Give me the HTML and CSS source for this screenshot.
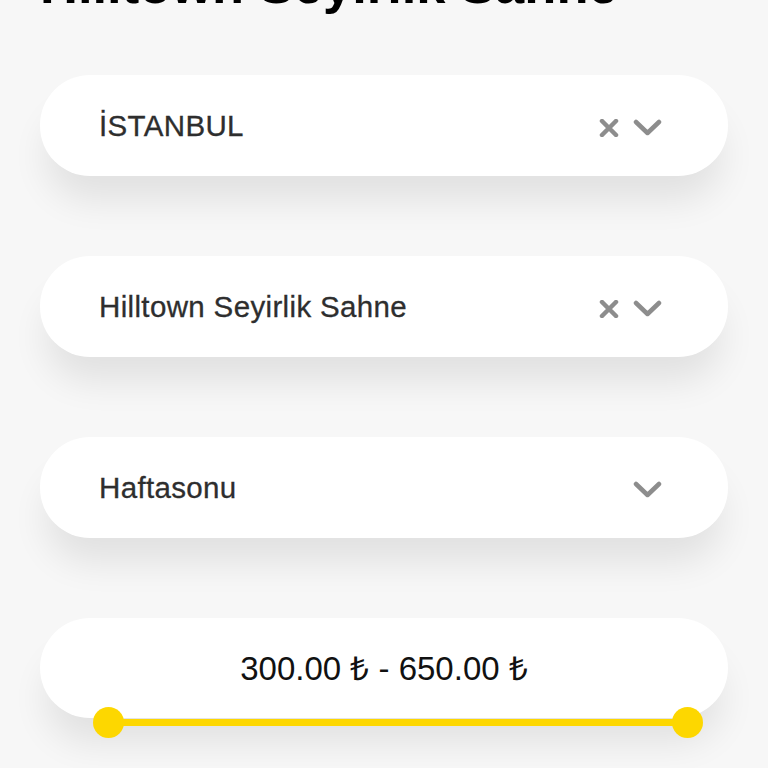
FILE: index.html
```html
<!DOCTYPE html>
<html lang="tr">
  <head>
    <meta charset="UTF-8" />
    <meta name="viewport" content="width=device-width, initial-scale=1.0" />
    <title>Filtre</title>
    <link rel="stylesheet" href="styles.css">
  </head>
  <body>
    <div class="page">
      <h1 class="title">Hilltown Seyirlik Sahne</h1>

      <div class="select">
        <span class="select-label">İSTANBUL</span>
        <div class="select-icons">
          <svg class="icon-clear" width="20" height="18" viewBox="0 0 20 18">
            <path d="M3 2 L17 16 M17 2 L3 16" />
          </svg>
          <svg class="icon-arrow" width="29" height="18" viewBox="0 0 29 18">
            <path d="M3 3 L14.5 14 L26 3" />
          </svg>
        </div>
      </div>

      <div class="select">
        <span class="select-label">Hilltown Seyirlik Sahne</span>
        <div class="select-icons">
          <svg class="icon-clear" width="20" height="18" viewBox="0 0 20 18">
            <path d="M3 2 L17 16 M17 2 L3 16" />
          </svg>
          <svg class="icon-arrow" width="29" height="18" viewBox="0 0 29 18">
            <path d="M3 3 L14.5 14 L26 3" />
          </svg>
        </div>
      </div>

      <div class="select">
        <span class="select-label">Haftasonu</span>
        <div class="select-icons">
          <svg class="icon-arrow" width="29" height="18" viewBox="0 0 29 18">
            <path d="M3 3 L14.5 14 L26 3" />
          </svg>
        </div>
      </div>

      <div class="price">
        <div class="price-card">300.00 ₺ - 650.00 ₺</div>
        <div class="range">
          <div class="knob"></div>
          <div class="track"></div>
          <div class="knob"></div>
        </div>
      </div>
    </div>
  </body>
</html>
```

FILE: styles.css
```css
* {
  margin: 0;
  padding: 0;
  box-sizing: border-box;
}
html,
body {
  background-color: #f7f7f7;
}
body {
  font-family: "Liberation Sans", Arial, sans-serif;
  color: #111;
  min-height: 100vh;
  overflow: hidden;
}
.page {
  padding: 0 40px 60px;
  display: flex;
  flex-direction: column;
}
.title {
  font-size: 52.5px;
  font-weight: bold;
  line-height: 60px;
  margin-top: -45px;
  margin-bottom: 60px;
  color: #000;
  white-space: nowrap;
}
.select {
  height: 101px;
  margin-bottom: 80px;
  background-color: #fff;
  border-radius: 50px;
  box-shadow: 0 30px 36px -6px rgba(0, 0, 0, 0.09);
  display: flex;
  align-items: center;
  justify-content: space-between;
  padding: 0 66px 0 59px;
}
.select-label {
  font-size: 29.5px;
  color: #2e2e2e;
  letter-spacing: 0.35px;
  -webkit-text-stroke: 0.3px #2e2e2e;
}
.select-icons {
  display: flex;
  align-items: center;
  gap: 14px;
  margin-top: 5px;
}
.select-icons svg {
  display: block;
  fill: none;
  stroke: #8d8d8d;
  stroke-width: 4.5;
  stroke-linecap: round;
  stroke-linejoin: round;
}
.price-card {
  height: 100px;
  padding-bottom: 2px;
  background-color: #fff;
  border-radius: 50px;
  box-shadow: 0 30px 36px -6px rgba(0, 0, 0, 0.09);
  display: flex;
  align-items: center;
  justify-content: center;
  font-size: 33px;
  color: #111;
}
.range {
  height: 31px;
  margin: -11px 25px 0 53px;
  display: flex;
  align-items: center;
}
.knob {
  width: 31px;
  height: 31px;
  border-radius: 50%;
  background-color: #fdd700;
  flex-shrink: 0;
}
.track {
  flex: 1;
  height: 7px;
  margin: 0 -2px;
  background-color: #fdd700;
}
```
